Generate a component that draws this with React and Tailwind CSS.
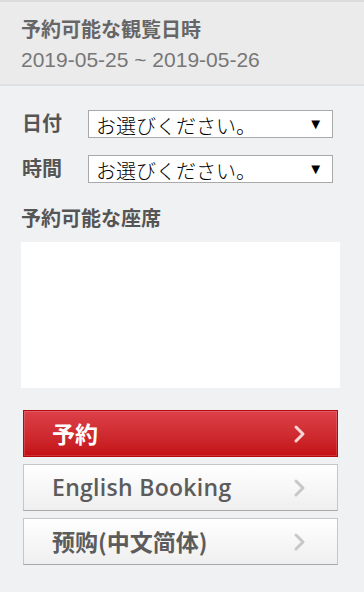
import React from 'react';

const Chevron = ({ color }) => (
  <svg width="14" height="20" viewBox="0 0 14 20" fill="none">
    <path d="M3 3 L10 10 L3 17" stroke={color} strokeWidth="3" strokeLinecap="round" strokeLinejoin="round" />
  </svg>
);

const Select = () => (
  <div className="flex h-[28px] flex-1 items-center justify-between border border-[#a9a9a9] bg-white pl-[7px] pr-[9px] pt-[5px] text-[20px] text-black">
    <span className="font-light">お選びください。</span>
    <span className="-mt-[6px] text-[15px] leading-none">▼</span>
  </div>
);

const BookButton = ({ label, primary, latin }) => (
  <div
    className={
      primary
        ? 'flex h-[47px] items-center justify-between border border-[#b5080d] bg-gradient-to-b from-[#dc4048] to-[#c30f14] pl-[28px] pr-[30px] text-white shadow-[inset_0_0_0_1px_rgba(255,255,255,0.15)]'
        : 'flex h-[47px] items-center justify-between border border-[#c6c6c6] border-b-[#a8a8a8] bg-gradient-to-b from-white to-[#efefef] pl-[28px] pr-[30px] text-[#5c5c5c]'
    }
  >
    <span
      className={latin ? 'text-[23px] font-semibold tracking-[0.3px]' : 'text-[23px] font-bold'}
      style={{ fontFamily: latin ? '"Open Sans", sans-serif' : '"Noto Sans CJK JP", sans-serif' }}
    >
      {label}
    </span>
    <Chevron color={primary ? '#f5d6d7' : '#c8c8c8'} />
  </div>
);

export default function App() {
  return (
    <div
      className="h-[592px] w-[364px] bg-[#f0f1f3]"
      style={{ fontFamily: '"Liberation Sans", "Noto Sans CJK JP", sans-serif' }}
    >
      <div className="h-[86px] border-t-2 border-b-2 border-t-[#dcdcdc] border-b-[#dfe0e2] bg-[#ebebec] px-[21px] pt-[15px]">
        <div className="text-[20px] font-bold leading-[26px] text-[#666]">予約可能な観覧日時</div>
        <div className="mt-[4px] text-[21px] leading-[26px] text-[#777]">2019-05-25 ~ 2019-05-26</div>
      </div>

      <div className="px-[21px] pt-[23px]">
        <div className="flex flex-col gap-[15px] pr-[10px]">
          <div className="flex items-center">
            <span className="w-[67px] pl-[1px] text-[20px] font-bold text-[#555]">日付</span>
            <Select />
          </div>
          <div className="flex items-center">
            <span className="w-[67px] pl-[1px] text-[20px] font-bold text-[#555]">時間</span>
            <Select />
          </div>
        </div>

        <div className="mt-[22px] text-[20px] font-bold leading-[26px] text-[#555]">予約可能な座席</div>
        <div className="mt-[10px] mr-[3px] h-[146px] bg-white"></div>

        <div className="mt-[22px] flex flex-col gap-[7px] pl-[2px] pr-[5px]">
          <BookButton label="予約" primary />
          <BookButton label="English Booking" latin />
          <BookButton label="预购(中文简体)" />
        </div>
      </div>
    </div>
  );
}
